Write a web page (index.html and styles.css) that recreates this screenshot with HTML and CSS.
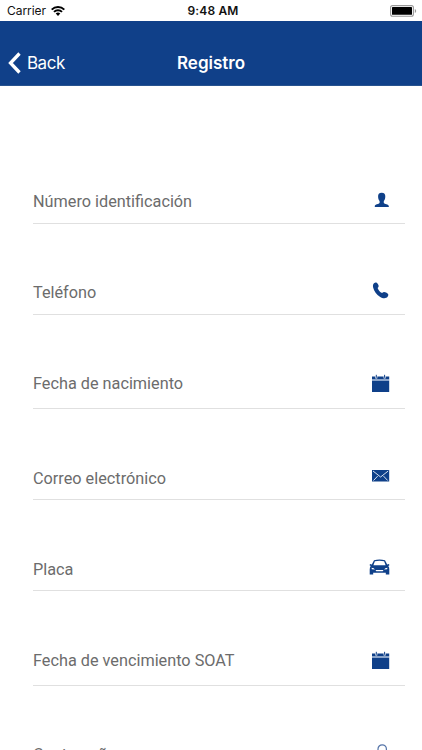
FILE: index.html
```
<!DOCTYPE html>
<html lang="es">
<head>
    <meta charset="UTF-8">
    <meta name="viewport" content="width=device-width, initial-scale=1.0">
    <title>Registro</title>
    <link rel="stylesheet" href="styles.css">
</head>
<body>
    <div class="status-bar">
        <div class="carrier">
            <span>Carrier</span>
            <svg class="wifi" viewBox="0 0 14 10">
                <path d="M.7 3.600a9 9 0 0 1 12.600 0M3 5.900a5.700 5.700 0 0 1 8 0" fill="none" stroke="#000" stroke-width="2"/>
                <path d="M7 10L4.700 7.600a3.300 3.300 0 0 1 4.600 0z"/>
            </svg>
        </div>
        <div class="time">9:48 AM</div>
        <div class="battery">
            <svg viewBox="0 0 27 12">
                <rect x="0.6" y="0.6" width="22.8" height="10.6" rx="2" fill="#fff" stroke="#999" stroke-width="1.1"/>
                <rect x="2" y="2" width="20" height="7.8" rx="0.6"/>
                <path d="M24.8 4v4q1.4-.6 1.4-2t-1.4-2z" fill="#999"/>
            </svg>
        </div>
    </div>

    <header class="navbar">
        <button class="back">
            <svg viewBox="0 0 13 22">
                <path d="M11.5 1.500L2.500 11l9 9.500" fill="none" stroke="#fff" stroke-width="3.300"/>
            </svg>
            <span>Back</span>
        </button>
        <h1>Registro</h1>
    </header>

    <main class="form">
        <div class="field">
            <label>Número identificación</label>
            <svg class="icon" viewBox="0 0 20 20">
                <path d="M10.700 1.800c2.700 0 3.700 1.600 3.600 3.800 0 2.100-.7 3.600-1.500 4.500v1.800c.5 1.100 5 1 5 3.100v1h-14v-1c0-2.100 4.300-2 4.800-3.100v-1.800C7.800 9.200 7.100 7.700 7.100 5.600 7 3.400 8 1.800 10.700 1.800z"/>
            </svg>
        </div>
        <div class="field">
            <label>Teléfono</label>
            <svg class="icon" viewBox="0 0 20 20">
                <path d="M3 1.300c1.600-1.300 3-.7 4 .9 1.100 1.700.8 2.600-.4 3.700.8 2.200 2.300 4.300 4.500 5.100 1.200-1.500 2.600-1.300 4-.4 2.600 1.500 2.800 2.600 1.500 4.200-1.600 2-4.700 1.900-7.700-.1C5.600 12.500 3 9.300 2.200 5.700 1.700 3.800 2 2.100 3 1.300z"/>
            </svg>
        </div>
        <div class="field date">
            <label>Fecha de nacimiento</label>
            <svg class="icon" viewBox="0 0 20 20">
                <path d="M1 2.500h17.200v3H1zM1 6.500h17.200V18H1z"/>
                <path d="M1 5.500h17.200v1H1z" fill="#8ea9d0"/>
                <path d="M5.300 1v3.500M13.600 1v3.500" stroke="#fff" stroke-width="2"/>
                <path d="M5.300 .8v3M13.600 .8v3" stroke="#0f4089" stroke-width="1"/>
            </svg>
        </div>
        <div class="field low">
            <label>Correo electrónico</label>
            <svg class="icon" viewBox="0 0 20 20">
                <path d="M1 4h17.200v11.500H1z"/>
                <path d="M2 5l7.600 6L17.200 5M2.500 14.500l4.200-4.400M16.700 14.500l-4.200-4.400" fill="none" stroke="#d5e0f0" stroke-width="1"/>
            </svg>
        </div>
        <div class="field low">
            <label>Placa</label>
            <svg class="icon car" viewBox="0 0 24 20">
                <path fill-rule="evenodd" d="M6 2.200Q11.500 1 17 2.200L19.200 6.500l1.800-.4.400 1.200-1.100.6Q21.400 9.200 21.300 11.500v5h-3.500v-1.700H5.200v1.700H1.700v-5q0-2.300 1-3.600l-1.100-.6.400-1.200 1.800.4zM6.900 3.300L5.400 7.200h12.200L16.100 3.300Q11.500 2.300 6.900 3.300zM3.500 9.700l.4 1.500 3 .3q-.7-1.700-3.400-1.800zM19.500 9.700q-2.700.1-3.400 1.800l3-.3zM7.500 12l.8 1.200h6.400l.8-1.200z"/>
            </svg>
        </div>
        <div class="field date last-date">
            <label>Fecha de vencimiento SOAT</label>
            <svg class="icon" viewBox="0 0 20 20">
                <path d="M1 2.500h17.200v3H1zM1 6.500h17.200V18H1z"/>
                <path d="M1 5.500h17.200v1H1z" fill="#8ea9d0"/>
                <path d="M5.300 1v3.500M13.600 1v3.500" stroke="#fff" stroke-width="2"/>
                <path d="M5.300 .8v3M13.600 .8v3" stroke="#0f4089" stroke-width="1"/>
            </svg>
        </div>
        <div class="field">
            <label>Contraseña</label>
            <svg class="icon" viewBox="0 0 20 20">
                <path d="M7 9V5a4.200 4.200 0 0 1 8.400 0v4" fill="none" stroke="#5574a8" stroke-width="1.200"/>
                <path d="M5.200 9h12v8h-12z"/>
            </svg>
        </div>
    </main>
</body>
</html>
```
FILE: styles.css
```
* {
    box-sizing: border-box;
}
body {
    margin: 0;
    height: 750px;
    overflow: hidden;
    background-color: #fff;
    font-family: Roboto, sans-serif;
}
.status-bar {
    display: grid;
    grid-template-columns: 1fr auto 1fr;
    align-items: center;
    height: 21px;
    padding: 0 5px 0 7px;
    font-family: Inter, sans-serif;
    font-size: 12px;
    color: #111;
}
.carrier {
    display: flex;
    align-items: center;
    gap: 5px;
    letter-spacing: -0.05px;
}
.wifi {
    width: 14px;
    height: 10px;
}
.time {
    padding-left: 2px;
    font-weight: 600;
    letter-spacing: 0.15px;
}
.battery {
    display: flex;
    justify-content: flex-end;
}
.battery svg {
    width: 27px;
    height: 12px;
}
.navbar {
    display: grid;
    grid-template-columns: 1fr auto 1fr;
    align-items: center;
    height: 65px;
    padding: 20px 8px 0 8px;
    background-color: #104089;
    border-bottom: 1px solid #28538f;
    color: #fff;
    font-family: Inter, sans-serif;
}
.back {
    display: flex;
    align-items: center;
    gap: 6px;
    padding: 0;
    border: none;
    background: none;
    color: #fff;
    font-family: inherit;
    font-size: 17px;
    letter-spacing: -0.5px;
}
.back svg {
    width: 13px;
    height: 22px;
}
.navbar h1 {
    margin: 0;
    font-size: 17px;
    font-weight: 600;
}
.form {
    padding: 47px 17px 0 33px;
}
.field {
    display: flex;
    align-items: flex-end;
    justify-content: space-between;
    height: 91px;
    padding: 0 14px 11px 0;
    border-bottom: 1px solid #e0e0e0;
    color: #6c6c6c;
}
.field.low {
    padding-bottom: 10px;
}
/* date pickers are a bit taller than the text inputs */
.field.date {
    height: 94px;
    padding-bottom: 14px;
}
.field.last-date {
    height: 95px;
}
.field label {
    font-size: 16.25px;
    line-height: 20px;
}
.icon {
    width: 20px;
    height: 20px;
    margin-bottom: 1px;
    fill: #0f4089;
}
.date .icon {
    margin-bottom: 0;
}
.low .icon {
    margin-bottom: 3px;
}
.low .icon.car {
    width: 24px;
    margin-right: -1px;
    margin-bottom: 2px;
}
```
